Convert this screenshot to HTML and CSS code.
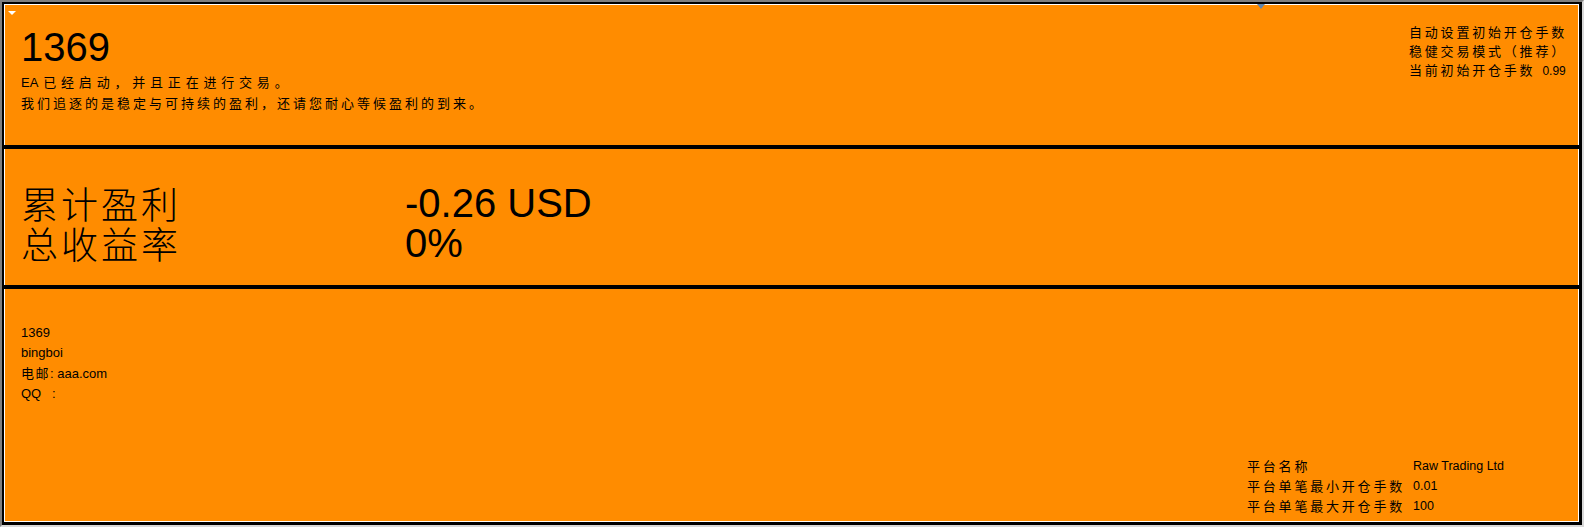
FILE: index.html
```html
<!DOCTYPE html>
<html lang="zh-CN">
<head>
<meta charset="utf-8">
<title>EA Panel</title>
<link rel="stylesheet" href="styles.css">
</head>
<body>
<div class="frame">
  <div class="inner">
    <span class="mark-left"></span>
    <span class="mark-top"></span>
    <section class="top">
      <div class="intro">
        <div class="big-id">1369</div>
        <div class="cn cn-first"><span class="latin">EA </span>已经启动，并且正在进行交易。</div>
        <div class="cn">我们追逐的是稳定与可持续的盈利，还请您耐心等候盈利的到来。</div>
      </div>
      <div class="settings">
        <div class="cn2">自动设置初始开仓手数</div>
        <div class="cn2">稳健交易模式（推荐）</div>
        <div class="cn2">当前初始开仓手数<span class="val">0.99</span></div>
      </div>
    </section>
    <hr class="rule">
    <section class="stats">
      <div class="label">累计盈利</div><div class="num">-0.26 USD</div>
      <div class="label">总收益率</div><div class="num">0%</div>
    </section>
    <hr class="rule">
    <section class="bottom">
      <div class="contact">
        <div class="line">1369</div>
        <div class="line">bingboi</div>
        <div class="line"><span class="cjk">电邮</span>: aaa.com</div>
        <div class="line">QQ&nbsp;&nbsp;&nbsp;:</div>
      </div>
      <div class="platform">
        <div class="plabel">平台名称</div><div class="pval">Raw Trading Ltd</div>
        <div class="plabel">平台单笔最小开仓手数</div><div class="pval">0.01</div>
        <div class="plabel">平台单笔最大开仓手数</div><div class="pval">100</div>
      </div>
    </section>
  </div>
</div>
</body>
</html>
```
FILE: styles.css
```css
html, body {
  margin: 0;
  padding: 0;
  background: #ffffff;
}

.frame {
  width: 1584px;
  height: 527px;
  box-sizing: border-box;
  border: 2px solid;
  border-color: #808080 #d8d8d8 #d8d8d8 #808080;
}

.inner {
  position: relative;
  height: 100%;
  box-sizing: border-box;
  border-style: solid;
  border-color: #000;
  border-width: 2px 3px 3px 2px;
  background: #ff8c00;
  box-shadow: inset 0 0 0 1px #ffffff;
  display: flex;
  flex-direction: column;
  color: #000;
  font-family: "Liberation Sans", Arial, "Noto Sans CJK SC", sans-serif;
}

.mark-left {
  position: absolute;
  left: 4px;
  top: 7px;
  width: 0;
  height: 0;
  border-left: 4px solid transparent;
  border-right: 4px solid transparent;
  border-top: 4px solid #ffffff;
}

.mark-top {
  position: absolute;
  left: 1253px;
  top: 0;
  width: 0;
  height: 0;
  border-left: 4px solid transparent;
  border-right: 4px solid transparent;
  border-top: 5px solid #5f86b0;
}

.top {
  height: 141px;
  box-sizing: border-box;
  padding: 18px 13px 0 17px;
  display: flex;
  justify-content: space-between;
  align-items: flex-start;
}

.big-id {
  font-family: "Liberation Sans", Arial, sans-serif;
  font-size: 40px;
  line-height: 46px;
  margin: 2px 0 2px 0;
}

.cn {
  font-family: "Noto Sans CJK SC", sans-serif;
  font-size: 13px;
  line-height: 20px;
  letter-spacing: 3px;
  white-space: nowrap;
}

.cn-first {
  letter-spacing: 4.8px;
}

.latin {
  font-family: "Liberation Sans", Arial, sans-serif;
  letter-spacing: 0;
  margin-right: 2px;
}

.settings {
  width: 157px;
}

.cn2 {
  font-family: "Noto Sans CJK SC", sans-serif;
  font-size: 13px;
  line-height: 19px;
  letter-spacing: 2.8px;
  white-space: nowrap;
}

.val {
  font-family: "Liberation Sans", Arial, sans-serif;
  font-size: 12px;
  letter-spacing: 0;
  margin-left: 7px;
}

.rule {
  height: 4px;
  margin: 0;
  border: 0;
  background: #000;
  flex: none;
}

.stats {
  height: 136px;
  box-sizing: border-box;
  padding: 34px 0 0 17px;
  display: grid;
  grid-template-columns: 384px auto;
  grid-auto-rows: 40px;
  align-content: start;
}

.label {
  font-family: "Noto Sans CJK SC", sans-serif;
  font-weight: 300;
  font-size: 37px;
  line-height: 40px;
  letter-spacing: 3px;
  white-space: nowrap;
}

.num {
  font-family: "Liberation Sans", Arial, sans-serif;
  font-size: 40px;
  line-height: 40px;
  white-space: nowrap;
}

.bottom {
  flex: 1;
  box-sizing: border-box;
  padding: 34px 66px 6px 17px;
  display: flex;
  flex-direction: column;
  justify-content: space-between;
}

.contact .line {
  font-size: 13px;
  line-height: 20px;
  white-space: nowrap;
}

.cjk {
  font-family: "Noto Sans CJK SC", sans-serif;
  letter-spacing: 1.5px;
}

.platform {
  align-self: flex-end;
  display: grid;
  grid-template-columns: 166px 100px;
  grid-auto-rows: 20px;
}

.plabel {
  font-family: "Noto Sans CJK SC", sans-serif;
  font-size: 13px;
  line-height: 20px;
  letter-spacing: 2.8px;
  white-space: nowrap;
}

.pval {
  font-family: "Liberation Sans", Arial, sans-serif;
  font-size: 12.5px;
  line-height: 20px;
  white-space: nowrap;
}
```
